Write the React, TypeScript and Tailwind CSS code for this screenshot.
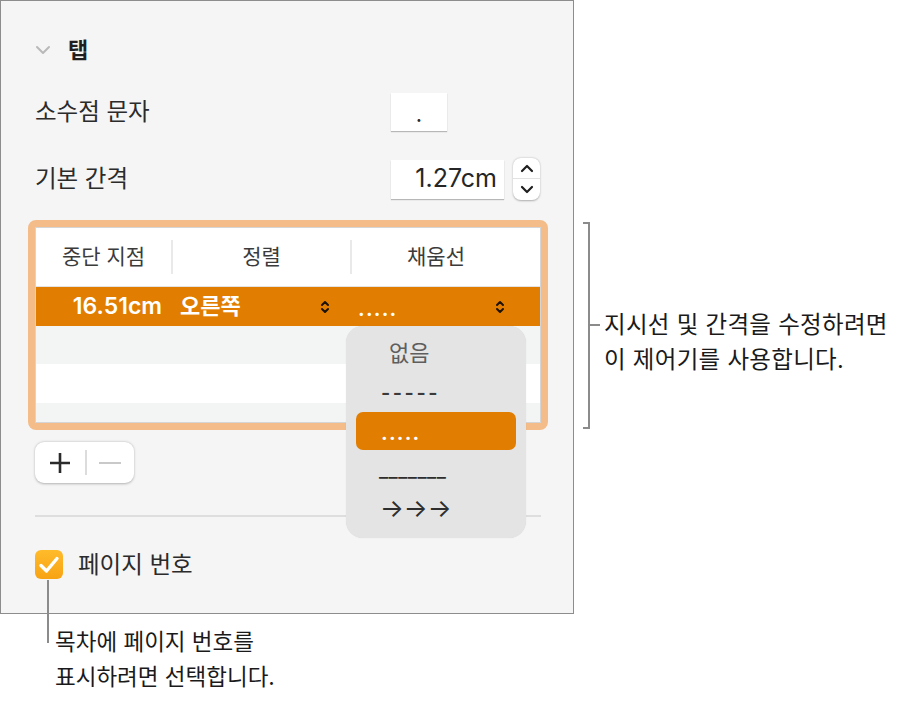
const FONT = "font-['Inter','Noto_Sans_CJK_KR',sans-serif]";

function UpDownIcon({ className = "" }: { className?: string }) {
  return (
    <svg width="10" height="16" viewBox="0 0 10 16" className={className} fill="none">
      <path d="M2 6 L5 3 L8 6" stroke="#1c1206" strokeWidth="2" strokeLinecap="round" strokeLinejoin="round" />
      <path d="M2 10 L5 13 L8 10" stroke="#1c1206" strokeWidth="2" strokeLinecap="round" strokeLinejoin="round" />
    </svg>
  );
}

function Stepper() {
  return (
    <div className="ml-[9px] flex h-[42px] w-[27px] flex-col items-center justify-between rounded-[8px] bg-white shadow-[0_0.5px_2px_rgba(0,0,0,0.3)]">
      <div className="flex h-[21px] w-full items-center justify-center border-b border-[#e2e2e2]">
        <svg width="14" height="9" viewBox="0 0 14 9" fill="none">
          <path d="M2 7 L7 2 L12 7" stroke="#1f1f1f" strokeWidth="2.2" strokeLinecap="round" strokeLinejoin="round" />
        </svg>
      </div>
      <div className="flex h-[21px] w-full items-center justify-center">
        <svg width="14" height="9" viewBox="0 0 14 9" fill="none">
          <path d="M2 2 L7 7 L12 2" stroke="#1f1f1f" strokeWidth="2.2" strokeLinecap="round" strokeLinejoin="round" />
        </svg>
      </div>
    </div>
  );
}

function TabStopsTable() {
  return (
    <div className="-ml-[7px] h-[210px] w-[520px] rounded-[8px] border-[7px] border-[#f4bc88]">
      <div className="h-full w-full overflow-hidden border border-[#d5d5d5] bg-white">
        {/* header */}
        <div className="grid h-[59px] grid-cols-[135px_179px_1fr] items-center border-b border-[#e3e3e3] text-[21px] text-[#3b3b3b]">
          <div className="text-center">중단 지점</div>
          <div className="border-l-2 border-[#e9e9e9] text-center leading-[34px]">정렬</div>
          <div className="border-l-2 border-[#e9e9e9] pr-[20px] text-center leading-[34px]">채움선</div>
        </div>
        {/* selected row */}
        <div className="grid h-[39px] grid-cols-[135px_179px_1fr] items-center bg-[#e17d00] text-white">
          <div className="pr-[9px] text-right text-[23px] font-semibold">16.51cm</div>
          <div className="flex items-center justify-between pl-[9px] pr-[20px] text-[22px] font-semibold">
            <span>오른쪽</span>
            <UpDownIcon />
          </div>
          <div className="flex items-center justify-between pl-[8px] pr-[35px]">
            <span className="pt-[4px] text-[20px] font-bold tracking-[1.2px]">.....</span>
            <UpDownIcon />
          </div>
        </div>
        <div className="h-[38px] bg-[#f3f4f4]" />
        <div className="h-[39px] bg-white" />
        <div className="h-[39px] bg-[#f3f4f4]" />
      </div>
    </div>
  );
}

function LeaderPopup() {
  return (
    <div className="absolute left-[345px] top-[325px] h-[212px] w-[180px] rounded-[17px] bg-[#e4e4e4] pb-[9px] pt-[8px] shadow-[0_0_1px_rgba(0,0,0,0.15)]">
      <div className="mx-[10px] flex h-[39px] items-center pl-[33px] text-[22px] text-[#5e5e5e]">없음</div>
      <div className="mx-[10px] flex h-[39px] items-center pl-[25px] text-[20px] font-semibold tracking-[2.5px] text-[#3a3a3a]">-----</div>
      <div className="mx-[10px] flex h-[38px] items-center rounded-[7px] bg-[#e17d00] pl-[25px] text-white">
        <span className="pt-[4px] text-[20px] font-bold tracking-[1.2px]">.....</span>
      </div>
      <div className="mx-[10px] flex h-[39px] items-center pl-[23px] text-[20px] tracking-[0.5px] text-[#2e2e2e]">_______</div>
      <div className="mx-[10px] flex h-[39px] items-center pl-[24px] text-[25px] text-[#2e2e2e]">→→→</div>
    </div>
  );
}

function InspectorPanel() {
  return (
    <div className="relative h-[614px] w-[574px] shrink-0 border border-[#8d8d8d] bg-[#f5f5f5] pl-[34px] pt-[36px] text-[#2b2b2b]">
      {/* section heading */}
      <div className="flex h-[26px] items-center">
        <svg width="16" height="10" viewBox="0 0 16 10" fill="none">
          <path d="M2 2 L8 8 L14 2" stroke="#b9b9b9" strokeWidth="2" strokeLinecap="round" strokeLinejoin="round" />
        </svg>
        <span className="ml-[17px] text-[22px] font-bold text-[#1f1f1f]">탭</span>
      </div>

      {/* decimal character */}
      <div className="mt-[30px] flex h-[38px] items-center">
        <div className="w-[356px] text-[23.5px]">소수점 문자</div>
        <div className="flex h-[38px] w-[56px] items-center justify-center bg-white pt-[4px] text-[22px] shadow-[0_1px_1px_rgba(0,0,0,0.25)]">
          .
        </div>
      </div>

      {/* default spacing */}
      <div className="mt-[27px] flex h-[42px] items-center">
        <div className="w-[356px] text-[23.5px]">기본 간격</div>
        <div className="flex h-[39px] w-[113px] items-center justify-end bg-white pr-[7px] text-[25px] text-[#262626] shadow-[0_1px_1px_rgba(0,0,0,0.25)]">
          1.27cm
        </div>
        <Stepper />
      </div>

      <div className="mt-[20px]">
        <TabStopsTable />
      </div>

      {/* add / remove */}
      <div className="mt-[12px] flex h-[41px] w-[99px] items-center rounded-[9px] bg-white shadow-[0_0.5px_2.5px_rgba(0,0,0,0.28)]">
        <div className="flex w-[50px] items-center justify-center">
          <svg width="22" height="22" viewBox="0 0 22 22" fill="none">
            <path d="M11 1 V21 M1 11 H21" stroke="#2a2a2a" strokeWidth="2.6" />
          </svg>
        </div>
        <div className="h-[25px] w-[1.5px] bg-[#dcdcdc]" />
        <div className="flex flex-1 items-center justify-center">
          <div className="h-[2px] w-[22px] bg-[#c9c9c9]" />
        </div>
      </div>

      <div className="mt-[32px] h-[2px] w-[506px] bg-[#dedede]" />

      {/* page numbers */}
      <div className="mt-[33px] flex h-[29px] items-center">
        <div className="flex h-[29px] w-[28px] items-center justify-center rounded-[6px] bg-gradient-to-b from-[#ffbb2a] to-[#f7a312]">
          <svg width="24" height="22" viewBox="0 0 24 22" fill="none">
            <path d="M4 11.5 L9.5 17 L20 4.5" stroke="white" strokeWidth="3.4" strokeLinecap="round" strokeLinejoin="round" />
          </svg>
        </div>
        <span className="ml-[15px] text-[23.5px]">페이지 번호</span>
      </div>

      <LeaderPopup />
    </div>
  );
}

export default function App() {
  return (
    <div className={`relative h-[702px] w-[904px] overflow-hidden bg-white ${FONT}`}>
      <div className="flex items-start">
        <InspectorPanel />

        {/* right annotation */}
        <div className="ml-[9px] mt-[222px] flex items-start">
          <div className="h-[207px] w-[7px] border-y-2 border-r-2 border-[#8b8b8b]" />
          <div className="mt-[85px] flex items-start">
            <div className="mt-[17px] h-[2px] w-[10px] bg-[#8b8b8b]" />
            <div className="ml-[4px] whitespace-nowrap text-[23.5px] tracking-[0.3px] leading-[35px] text-[#1a1a1a]">
              지시선 및 간격을 수정하려면
              <br />
              이 제어기를 사용합니다.
            </div>
          </div>
        </div>
      </div>

      {/* bottom annotation */}
      <div className="mt-[10px] pl-[55px] text-[22.5px] leading-[35px] text-[#1a1a1a]">
        목차에 페이지 번호를
        <br />
        표시하려면 선택합니다.
      </div>
      <div className="absolute left-[47px] top-[580px] h-[63px] w-[2px] bg-[#8b8b8b]" />
    </div>
  );
}
